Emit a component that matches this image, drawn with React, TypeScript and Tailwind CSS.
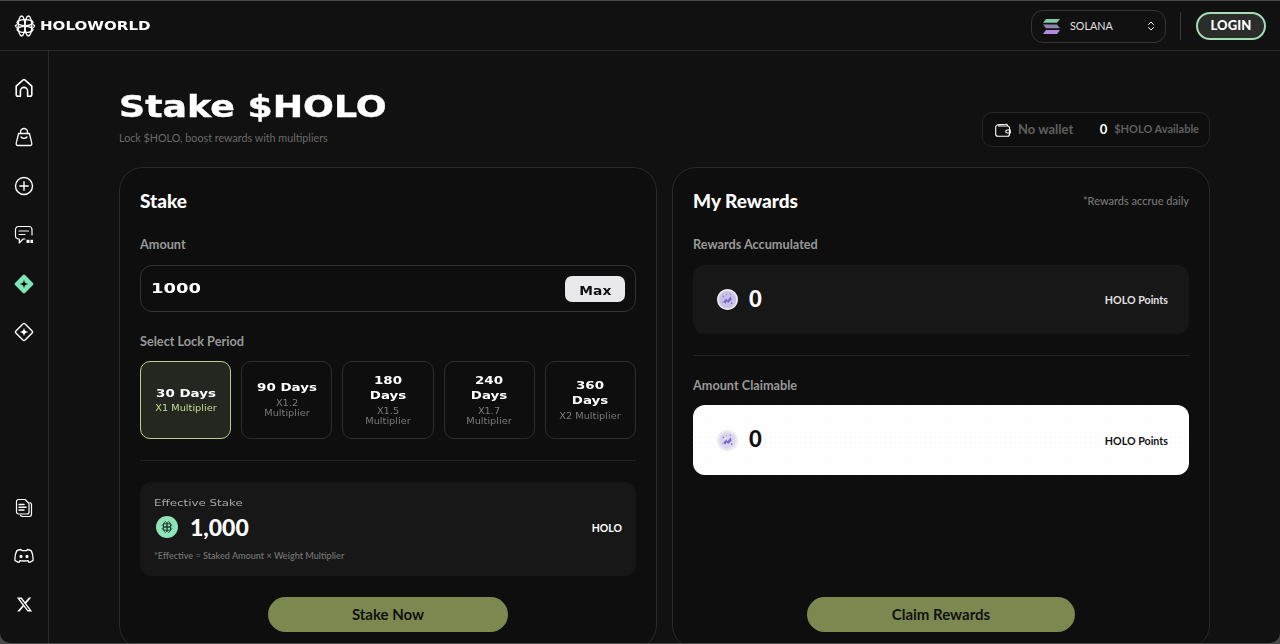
import { ChevronsUpDown } from 'lucide-react';
import { FaXTwitter } from 'react-icons/fa6';

const display = "font-['DejaVu_Sans',sans-serif]";

function Logo() {
  return (
    <svg width="22" height="22" viewBox="0 0 22 22" fill="none" stroke="white" strokeWidth="1.3">
      <ellipse cx="7.6" cy="11" rx="3.4" ry="10" />
      <ellipse cx="14.4" cy="11" rx="3.4" ry="10" />
      <ellipse cx="11" cy="7.6" rx="8" ry="3" />
      <ellipse cx="11" cy="14.4" rx="8" ry="3" />
      <path d="M1 11l2-1.6M1 11l2 1.6M21 11l-2-1.6M21 11l-2 1.6" />
    </svg>
  );
}

function HomeIcon() {
  return (
    <svg width="20" height="20" viewBox="0 0 20 20" fill="none" stroke="white" strokeWidth="1.6" strokeLinejoin="round">
      <path d="M2.2 8.2 8.600 2.300a2 2 0 0 1 2.800 0l6.400 5.900V16.500a1.800 1.800 0 0 1-1.800 1.800h-2.400v-5.300a3.600 3.600 0 0 0-7.200 0v5.300H4a1.800 1.800 0 0 1-1.800-1.800z" />
    </svg>
  );
}

function BagIcon() {
  return (
    <svg width="20" height="20" viewBox="0 0 20 20" fill="none" stroke="white" strokeWidth="1.3" strokeLinecap="round" strokeLinejoin="round">
      <path d="M4.600 6.500h10.800l2.400 9.700a1.800 1.800 0 0 1-1.800 2.300H4a1.800 1.800 0 0 1-1.800-2.300z" />
      <path d="M6.500 6.500V5a3.500 3.500 0 0 1 7 0v1.500" />
      <path d="M7 10c1.400 1.900 4.600 1.900 6 0" />
    </svg>
  );
}

function PlusCircleIcon() {
  return (
    <svg width="20" height="20" viewBox="0 0 20 20" fill="none" stroke="white" strokeWidth="1.4" strokeLinecap="round">
      <circle cx="10" cy="10" r="8.500" />
      <path d="M10 5.800v8.400M5.800 10h8.400" />
    </svg>
  );
}

function ChatIcon() {
  return (
    <svg width="20" height="20" viewBox="0 0 20 20" fill="none" stroke="white" strokeWidth="1.2" strokeLinecap="round" strokeLinejoin="round">
      <path d="M18 10V4.500a3 3 0 0 0-3-3H4.500a3 3 0 0 0-3 3v6.500a3 3 0 0 0 3 3h.8v4l3.700-4H11" />
      <path d="M5 6h9.500M5 9.500h6" />
      <rect x="12.500" y="14.800" width="3" height="3.200" fill="white" stroke="none" />
      <rect x="16.500" y="14.800" width="2.500" height="3.200" fill="white" stroke="none" />
    </svg>
  );
}

function DiamondIcon({ active }: { active?: boolean }) {
  return (
    <svg width="20" height="20" viewBox="0 0 20 20">
      {active ? (
        <path d="M8.700 1.300a1.800 1.800 0 0 1 2.600 0l7.400 7.400a1.800 1.800 0 0 1 0 2.600l-7.400 7.400a1.800 1.800 0 0 1-2.600 0l-7.400-7.400a1.800 1.800 0 0 1 0-2.600z" fill="#7fe5b5" />
      ) : (
        <path d="M8.900 1.900a1.500 1.500 0 0 1 2.200 0l7 7a1.500 1.500 0 0 1 0 2.200l-7 7a1.500 1.500 0 0 1-2.200 0l-7-7a1.500 1.500 0 0 1 0-2.200z" fill="none" stroke="white" strokeWidth="1.400" />
      )}
      <path d="M10 5.500c.4 3 1.500 4.100 4.500 4.500-3 .4-4.100 1.500-4.500 4.500-.4-3-1.500-4.100-4.500-4.500 3-.4 4.100-1.500 4.500-4.500z" fill={active ? '#111111' : 'white'} />
    </svg>
  );
}

function DocsIcon() {
  return (
    <svg width="20" height="20" viewBox="0 0 20 20" fill="none" stroke="white" strokeWidth="1.2" strokeLinecap="round" strokeLinejoin="round">
      <path d="M16 4.500c1 .3 1.500 1 1.500 2V16a2.500 2.500 0 0 1-2.500 2.500H8.500c-1 0-1.700-.4-2-1.200" />
      <path d="M4.500 1.500h6.500L15 5.500V14a2 2 0 0 1-2 2H4.500a2 2 0 0 1-2-2V3.500a2 2 0 0 1 2-2z" />
      <path d="M5 6.500h5M5 9.200h7M5 12h5" strokeWidth="1.500" />
    </svg>
  );
}

function DiscordIcon() {
  return (
    <svg width="20" height="16" viewBox="0 0 20 16" fill="none" stroke="white" strokeWidth="1.300" strokeLinejoin="round">
      <path d="M6.700 1.500c-1.600.2-3 .7-4 1.400C1.200 6 .7 9.300 1 12.500c1.300 1 2.700 1.600 4 1.900l1-1.800c1.300.5 6.700.5 8 0l1 1.800c1.300-.3 2.700-.9 4-1.900.3-3.200-.2-6.500-1.700-9.600-1-.7-2.400-1.200-4-1.400l-.6 1.200c-1.500-.2-3-.2-4.500 0z" />
      <ellipse cx="7" cy="8.500" rx="1.500" ry="1.700" fill="white" stroke="none" />
      <ellipse cx="13" cy="8.500" rx="1.500" ry="1.700" fill="white" stroke="none" />
    </svg>
  );
}

function SolanaIcon() {
  return (
    <svg width="17" height="15" viewBox="0 0 17 15">
      <path d="M3 0h14l-3 3.800H0z" fill="#7fc9a5" />
      <path d="M0 5.600h14l3 3.600H3z" fill="#8f86b0" />
      <path d="M3 11h14l-3 4H0z" fill="#b28ae6" />
    </svg>
  );
}

function WalletIcon() {
  return (
    <svg width="16" height="14" viewBox="0 0 16 14" fill="none" stroke="white" strokeWidth="1.100" strokeLinejoin="round">
      <path d="M12.500 3V2.500a1.500 1.500 0 0 0-1.700-1.400L2.800 1.800C1.600 2 .7 2.800.7 4v7a2.300 2.300 0 0 0 2.300 2.300h9.500a2 2 0 0 0 2-2V5a2 2 0 0 0-2-2H3" />
      <path d="M15.300 7h-3a1.500 1.500 0 0 0 0 3h3z" />
    </svg>
  );
}

function PointsCoin({ light }: { light?: boolean }) {
  return (
    <div className={`flex h-[21px] w-[21px] items-center justify-center rounded-full blur-[0.3px] ${light ? 'bg-[#e6e3ef]' : 'bg-[#cfccd8]'}`}>
      <svg width="21" height="21" viewBox="0 0 20 20">
        <circle cx="10" cy="10" r="7.500" fill={light ? '#dcd6ee' : '#c9bfe8'} />
        <path d="M6 12l3-3 1 2 3-4 1 3-3 3-2-1-1 2z" fill="#7f66c9" />
        <circle cx="6" cy="7" r="0.800" fill="#8a76cf" />
        <circle cx="14" cy="13.500" r="0.800" fill="#8a76cf" />
        <circle cx="12.500" cy="5" r="0.700" fill="#9d8dd6" />
        <circle cx="5.500" cy="12.800" r="0.600" fill="#9d8dd6" />
        <circle cx="9" cy="5.500" r="0.500" fill="#8a76cf" />
        <circle cx="10" cy="10" r="9.200" fill="none" stroke="#efeef3" strokeWidth="1.200" />
      </svg>
    </div>
  );
}

const navTop = [
  <HomeIcon key="home" />,
  <BagIcon key="bag" />,
  <PlusCircleIcon key="plus" />,
  <ChatIcon key="chat" />,
  <DiamondIcon key="stake" active />,
  <DiamondIcon key="diamond" />,
];

const navBottom = [
  <DocsIcon key="docs" />,
  <DiscordIcon key="discord" />,
  <FaXTwitter key="x" size={17} color="white" />,
];

const periods = [
  { days: '30 Days', mult: 'X1 Multiplier', active: true },
  { days: '90 Days', mult: 'X1.2 Multiplier' },
  { days: '180 Days', mult: 'X1.5 Multiplier' },
  { days: '240 Days', mult: 'X1.7 Multiplier' },
  { days: '360 Days', mult: 'X2 Multiplier' },
];

export default function App() {
  return (
    <div className="h-[644px] w-[1280px] overflow-hidden bg-[#4a4a4a] pt-px font-['Lato',sans-serif]">
      <div className="flex h-[642px] flex-col overflow-hidden rounded-b-[10px] bg-[#111111] text-white">
        <header className="flex h-[50px] shrink-0 items-center justify-between border-b border-[#2a2a2a] pl-[14px] pr-[14px] pt-px">
          <div className="flex items-center gap-[4px]">
            <Logo />
            <span className={`${display} origin-left scale-x-[1.16] text-[13px] font-bold`}>HOLOWORLD</span>
          </div>
          <div className="flex items-center">
            <button className="flex h-[33px] w-[135px] items-center rounded-[12px] border border-[#363636] pl-[11px] pr-[8px] text-[10.800px] text-[#e0e0e0]">
              <SolanaIcon />
              <span className="ml-[10px]">SOLANA</span>
              <ChevronsUpDown size={12} className="ml-auto text-white" />
            </button>
            <div className="ml-[14px] mr-[15px] h-[28px] w-px bg-[#3a3a3a]" />
            <button className="h-[28px] w-[70px] rounded-full border-2 border-[#a4dcb4] bg-[#2a2d2a] text-[13px] font-black tracking-[0.1px]">
              LOGIN
            </button>
          </div>
        </header>

        <div className="flex min-h-0 flex-1">
          <aside className="flex w-[49px] shrink-0 flex-col justify-between border-r border-[#2a2a2a] pb-[14px] pt-[13px]">
            <nav className="flex flex-col">
              {navTop.map((icon, i) => (
                <div key={i} className="flex h-[48.800px] items-center justify-center">{icon}</div>
              ))}
            </nav>
            <nav className="flex flex-col">
              {navBottom.map((icon, i) => (
                <div key={i} className="flex h-[48.500px] items-center justify-center">{icon}</div>
              ))}
            </nav>
          </aside>

          <main className="min-w-0 flex-1 overflow-hidden pl-[70px] pr-[70px] pt-[38px]">
            <div className="mb-[20px] flex items-end justify-between">
              <div className="pb-px">
                <h1 className={`${display} origin-left scale-x-[1.21] text-[30px] font-bold leading-[36px] [-webkit-text-stroke:0.4px_white]`}>Stake $HOLO</h1>
                <p className="mt-[5px] text-[10.750px] leading-4 text-[#6a6a6a]">Lock $HOLO, boost rewards with multipliers</p>
              </div>
              <div className="flex h-[35px] w-[228px] items-center rounded-[10px] border border-[#262626] bg-[#0e0e0e] pl-[12px] pr-[10px]">
                <WalletIcon />
                <span className="ml-[7px] text-[13px] font-bold text-[#5f5f5f]">No wallet</span>
                <span className="ml-auto text-[13px] font-bold text-white">0</span>
                <span className="ml-[7px] text-[11px] font-bold text-[#5f5f5f]">$HOLO Available</span>
              </div>
            </div>

            <div className="grid grid-cols-2 gap-[15px]">
              <section className="flex h-[482px] flex-col rounded-[24px] border border-[#2a2a2a] bg-[#0e0e0e] px-[20px] pt-[21px]">
                <h2 className="text-[19px] font-black leading-6">Stake</h2>
                <label className="mt-[22px] text-[12.700px] font-bold leading-[18px] text-[#999999]">Amount</label>
                <div className="mt-[12px] flex h-[47px] items-center justify-between rounded-[12px] border border-[#333333] pl-[10px] pr-[10px]">
                  <span className={`${display} origin-left scale-x-[1.28] text-[14px] font-bold`}>1000</span>
                  <button className="h-[26px] w-[60px] rounded-[7px] bg-[#e9e9ec] text-[#111111]">
                    <span className={`${display} inline-block scale-x-[1.2] text-[11.500px] font-bold`}>Max</span>
                  </button>
                </div>
                <label className="mt-[20px] text-[12.700px] font-bold leading-[18px] text-[#999999]">Select Lock Period</label>
                <div className="mt-[11px] grid h-[78px] grid-cols-5 gap-[10px]">
                  {periods.map((p) => (
                    <div
                      key={p.days}
                      className={`flex items-center justify-center rounded-[10px] border text-center ${display} ${
                        p.active ? 'border-[#b9cf8d] bg-[#23271f]' : 'border-[#2e2e2e]'
                      }`}
                    >
                      <div className="w-[54px] shrink-0 scale-x-[1.22]">
                        <div className="text-[11px] font-bold leading-[15.500px]">{p.days}</div>
                        <div className={`mt-[3px] text-[8px] leading-[10.500px] ${p.active ? 'text-[#c3dd92]' : 'text-[#7a7a7a]'}`}>{p.mult}</div>
                      </div>
                    </div>
                  ))}
                </div>
                <div className="mt-[21px] h-px bg-[#242424]" />
                <div className="mt-[21px] flex h-[94px] flex-col rounded-[12px] bg-[#171717] px-[14px] pt-[15px]">
                  <div className={`${display} origin-left scale-x-[1.25] text-[9.500px] leading-[11px] text-[#a8a8a8]`}>Effective Stake</div>
                  <div className="mt-[5px] flex items-center justify-between">
                    <div className="flex items-center gap-[12px]">
                      <div className="ml-[2px] flex h-[22px] w-[22px] items-center justify-center rounded-full bg-[#8fe3b8]">
                        <svg width="12" height="12" viewBox="0 0 12 12" fill="none" stroke="#1c3a2a" strokeWidth="0.900">
                          <ellipse cx="4.300" cy="6" rx="2" ry="5.400" />
                          <ellipse cx="7.700" cy="6" rx="2" ry="5.400" />
                          <ellipse cx="6" cy="4.300" rx="4.800" ry="1.700" />
                          <ellipse cx="6" cy="7.700" rx="4.800" ry="1.700" />
                        </svg>
                      </div>
                      <span className="text-[23px] font-black leading-[28px]">1,000</span>
                    </div>
                    <span className="mt-[3px] text-[10.500px] font-bold">HOLO</span>
                  </div>
                  <p className="mt-[9px] text-[9.100px] font-medium leading-[12px] text-[#777777]">*Effective = Staked Amount × Weight Multiplier</p>
                </div>
                <button className="mx-auto mt-[21px] h-[35px] w-[240px] rounded-full bg-[#7b8951] text-[15px] font-bold text-[#111111]">Stake Now</button>
              </section>

              <section className="flex h-[482px] flex-col rounded-[24px] border border-[#2a2a2a] bg-[#0e0e0e] px-[20px] pt-[21px]">
                <div className="flex items-center justify-between">
                  <h2 className="text-[19px] font-black leading-6">My Rewards</h2>
                  <span className="text-[11px] font-medium text-[#777777]">*Rewards accrue daily</span>
                </div>
                <label className="mt-[22px] text-[12.700px] font-bold leading-[18px] text-[#999999]">Rewards Accumulated</label>
                <div className="mt-[12px] flex h-[69px] items-center justify-between rounded-[12px] bg-[#171717] pl-[24px] pr-[21px]">
                  <div className="flex items-center gap-[11px]">
                    <PointsCoin />
                    <span className="-mt-[2px] text-[22px] font-black leading-[28px]">0</span>
                  </div>
                  <span className="mt-[2px] text-[10.700px] font-bold text-[#e0e0e0]">HOLO Points</span>
                </div>
                <div className="mt-[21px] h-px bg-[#242424]" />
                <label className="mt-[20px] text-[12.700px] font-bold leading-[18px] text-[#999999]">Amount Claimable</label>
                <div className="mt-[11px] flex h-[70px] items-center justify-between rounded-[12px] bg-white bg-[radial-gradient(#f1f1f1_0.6px,transparent_0.6px)] bg-[length:5px_5px] pl-[24px] pr-[21px] text-[#111111]">
                  <div className="flex items-center gap-[11px]">
                    <PointsCoin light />
                    <span className="-mt-[2px] text-[22px] font-black leading-[28px]">0</span>
                  </div>
                  <span className="mt-[2px] text-[10.700px] font-bold">HOLO Points</span>
                </div>
                <button className="mx-auto mt-[122px] h-[35px] w-[268px] rounded-full bg-[#7b8951] text-[15px] font-bold text-[#111111]">Claim Rewards</button>
              </section>
            </div>
          </main>
        </div>
      </div>
    </div>
  );
}
